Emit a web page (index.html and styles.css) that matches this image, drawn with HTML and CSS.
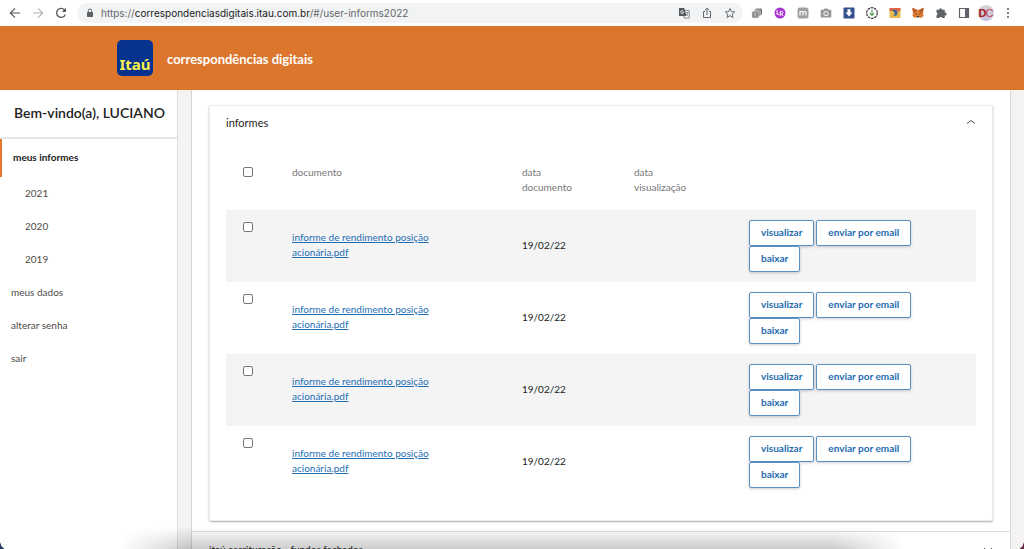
FILE: index.html
```html
<!DOCTYPE html>
<html lang="pt-BR">
<head>
<meta charset="utf-8">
<meta name="viewport" content="width=device-width, initial-scale=1">
<title>correspondências digitais</title>
<link rel="stylesheet" href="styles.css">
</head>
<body>
<div class="toolbar">
  <button class="tool" aria-label="Voltar"><svg viewBox="0 0 14 14"><path d="M12 7H2.500M7 2.300 2.300 7 7 11.700" fill="none" stroke="#55585c" stroke-width="1.200"/></svg></button>
  <button class="tool" aria-label="Avançar"><svg viewBox="0 0 14 14"><path d="M2 7h9.500M7 2.300 11.700 7 7 11.700" fill="none" stroke="#b4b6b9" stroke-width="1.200"/></svg></button>
  <button class="tool" aria-label="Recarregar"><svg viewBox="0 0 14 14"><path d="M10.800 4.300A4.500 4.500 0 1 0 11.300 8.500" fill="none" stroke="#55585c" stroke-width="1.300"/><path d="M12 1.800v4.200H7.800z" fill="#55585c"/></svg></button>
  <div class="address">
    <svg class="lock" viewBox="0 0 8 10"><rect x="1" y="4" width="6" height="5" rx=".6" fill="#5f6368"/><path d="M2.300 4V2.700a1.700 1.700 0 0 1 3.400 0V4" fill="none" stroke="#5f6368"/></svg>
    <span class="url">https://<span class="host">correspondenciasdigitais.itau.com.br</span>/#/user-informs2022</span>
    <button class="small" aria-label="Traduzir"><svg viewBox="0 0 12 12"><path d="M4.500 3.500h6.800v7.600H6.200z" fill="#f1f3f4" stroke="#74777b" stroke-width=".8"/><path d="M1 1h5.300l2 8H1z" fill="#55585c"/><path d="M7.300 5.700h3.200M9 4.900v.8M10 5.700q-.7 2-2.300 3M8 6.500q.8 1.500 2.300 2.200" fill="none" stroke="#777" stroke-width=".7"/><path d="M5.300 4A1.500 1.500 0 1 0 5.400 6V5.200H4" fill="none" stroke="#fff" stroke-width=".8"/></svg></button>
    <button class="small" aria-label="Compartilhar"><svg viewBox="0 0 12 12"><path d="M4 4.500H2.500v6h7v-6H8M6 8V1.500M3.900 3.300 6 1.200l2.100 2.100" fill="none" stroke="#5f6368" stroke-width=".95"/></svg></button>
    <button class="small" aria-label="Favoritar"><svg viewBox="0 0 12 12"><path d="m6 1.500 1.350 3.100 3.350.3-2.500 2.250.75 3.300L6 8.700l-2.950 1.750.75-3.300L1.300 4.900l3.350-.3z" fill="none" stroke="#5f6368" stroke-width=".95"/></svg></button>
  </div>
  <div class="extensions">
    <button class="small" aria-label="Abas"><svg viewBox="0 0 12 12"><rect x="4.500" y="1.500" width="6.500" height="6.500" rx="1" fill="#777"/><rect x="2.800" y="3" width="6.500" height="6.500" rx="1" fill="#999" stroke="#ddd" stroke-width=".5"/><rect x="1" y="4.500" width="6.500" height="6.500" rx="1" fill="#888" stroke="#ddd" stroke-width=".5"/><path d="M4.200 6v3.500M3.200 6.800l1-.8" stroke="#ddd" stroke-width=".8"/></svg></button>
    <button class="small" aria-label="LanguageTool"><svg viewBox="0 0 12 12"><circle cx="6" cy="6" r="5.500" fill="#a832d0"/><path d="M3 3v4.200h2M6.200 9V4.300h1.500a1.200 1.200 0 0 1 0 2.500H6.400M7.600 6.800 9 9" fill="none" stroke="#fff" stroke-width="1"/></svg></button>
    <button class="small" aria-label="Extensão M"><svg viewBox="0 0 12 12"><rect x=".5" y=".5" width="11" height="11" rx="2.500" fill="#a0a0a0"/><path d="M3 8.500V4.200M3 5.300q1.500-1.600 3 0v3.200M6 5.300q1.500-1.600 3 0v3.200" fill="none" stroke="#fff" stroke-width="1.200"/></svg></button>
    <button class="small" aria-label="Captura de tela"><svg viewBox="0 0 12 12"><path d="M1.700 2.800H3.500l1-1.400h3l1 1.400h1.800a1 1 0 0 1 1 1v5.700a1 1 0 0 1-1 1H1.700a1 1 0 0 1-1-1V3.800a1 1 0 0 1 1-1z" fill="#979797"/><circle cx="6" cy="6.500" r="2.600" fill="#eee"/><circle cx="6" cy="6.500" r="1.600" fill="#999"/></svg></button>
    <button class="small" aria-label="Baixar mídia"><svg viewBox="0 0 12 12"><rect x=".5" y=".5" width="11" height="11" rx=".8" fill="#34508c"/><path d="M4.500 2.300h3v3.200h2L6 9.500 2.500 5.500h2z" fill="#fff"/></svg></button>
    <button class="small" aria-label="Gerenciador de downloads"><svg viewBox="0 0 12 12"><circle cx="6" cy="6" r="5.300" fill="none" stroke="#333" stroke-width="1.200" stroke-dasharray="2.500 .8"/><path d="M6 2.700v5.700M3.800 6.200 6 8.500l2.200-2.300" fill="none" stroke="#5fa25c" stroke-width="1.200"/></svg></button>
    <button class="small" aria-label="Mapa"><svg viewBox="0 0 12 12"><rect x=".5" y="1" width="11" height="10" fill="#e8b94c"/><path d="M.5 1h11v3H.5z" fill="#d8664b"/><path d="M3 3h3.500L9 5 7.500 8.500 4.500 9 6 6z" fill="#34659b"/></svg></button>
    <button class="small" aria-label="MetaMask"><svg viewBox="0 0 12 12"><path d="m.4.700 4.300 2h2.600l4.300-2-.6 4.800.6 3.500-2.600 1.900-1.500-.7H4.500L3 10.900.4 9 1 5.500z" fill="#de7d32"/><path d="m.4.700 4.300 2-.8 2.700H1zM11.600.700l-4.300 2 .8 2.700H11z" fill="#b95a2b"/><path d="M3.300 6.200 5 7l-.8.700zM8.700 6.200 7 7l.8.700zM5 9h2l.5 1.200h-3z" fill="#343434"/></svg></button>
    <button class="small" aria-label="Extensões"><svg viewBox="0 0 12 12"><path d="M1.500 2.800h2.700a1.500 1.500 0 1 1 3 0h2.600v2.800a1.500 1.500 0 1 1 0 2.900V11H7.200a1.500 1.500 0 0 0-2.900 0H1.500V8.400a1.500 1.500 0 0 0 0-2.800z" fill="#5f6368"/></svg></button>
    <button class="small" aria-label="Painel lateral"><svg viewBox="0 0 12 12"><path d="M1.500 1.500h9v9h-9z" fill="#fff" stroke="#5f6368" stroke-width="1.200"/><path d="M7 1.500h3.500v9H7z" fill="#5f6368"/></svg></button>
    <button class="profile" aria-label="Perfil"><span class="initial-d">D</span><span class="initial-c">C</span></button>
    <button class="small" aria-label="Menu"><svg viewBox="0 0 12 12"><g fill="#5f6368"><circle cx="6" cy="2" r="1.100"/><circle cx="6" cy="6" r="1.100"/><circle cx="6" cy="10" r="1.100"/></g></svg></button>
  </div>
</div>

<header class="header">
  <div class="logo">Itaú</div>
  <h1 class="title">correspondências digitais</h1>
</header>

<div class="page">
  <aside class="sidebar">
    <h2 class="welcome">Bem-vindo(a), LUCIANO</h2>
    <nav class="menu">
      <a class="item active" href="#informes">meus informes</a>
      <a class="item year" href="#2021">2021</a>
      <a class="item year" href="#2020">2020</a>
      <a class="item year" href="#2019">2019</a>
      <a class="item" href="#dados">meus dados</a>
      <a class="item" href="#senha">alterar senha</a>
      <a class="item" href="#sair">sair</a>
    </nav>
  </aside>
  <main class="main">
    <section class="card">
      <button class="card-head" aria-expanded="true">informes
        <svg class="chevron" viewBox="0 0 10 6"><path d="M1 4.500 5 1.500 9 4.500" fill="none" stroke="#555"/></svg>
      </button>
      <table class="docs">
        <thead>
          <tr><th class="pick"><input class="check" type="checkbox" aria-label="selecionar todos"></th><th class="name">documento</th><th class="date">data documento</th><th class="seen">data visualização</th><th class="actions"></th></tr>
        </thead>
        <tbody>
          <tr><td class="pick"><input class="check" type="checkbox" aria-label="selecionar informe 1"></td><td class="name"><a class="doc" href="#doc1">informe de rendimento posição acionária.pdf</a></td><td class="date">19/02/22</td><td class="seen"></td><td class="actions"><div class="buttons"><button class="btn">visualizar</button><button class="btn">enviar por email</button><button class="btn">baixar</button></div></td></tr>
          <tr><td class="pick"><input class="check" type="checkbox" aria-label="selecionar informe 2"></td><td class="name"><a class="doc" href="#doc2">informe de rendimento posição acionária.pdf</a></td><td class="date">19/02/22</td><td class="seen"></td><td class="actions"><div class="buttons"><button class="btn">visualizar</button><button class="btn">enviar por email</button><button class="btn">baixar</button></div></td></tr>
          <tr><td class="pick"><input class="check" type="checkbox" aria-label="selecionar informe 3"></td><td class="name"><a class="doc" href="#doc3">informe de rendimento posição acionária.pdf</a></td><td class="date">19/02/22</td><td class="seen"></td><td class="actions"><div class="buttons"><button class="btn">visualizar</button><button class="btn">enviar por email</button><button class="btn">baixar</button></div></td></tr>
          <tr><td class="pick"><input class="check" type="checkbox" aria-label="selecionar informe 4"></td><td class="name"><a class="doc" href="#doc4">informe de rendimento posição acionária.pdf</a></td><td class="date">19/02/22</td><td class="seen"></td><td class="actions"><div class="buttons"><button class="btn">visualizar</button><button class="btn">enviar por email</button><button class="btn">baixar</button></div></td></tr>
        </tbody>
      </table>
    </section>
    <button class="next" aria-expanded="false">itaú escrituração - fundos fechados
      <svg class="chevron" viewBox="0 0 10 6"><path d="M1 1Q5 5.500 9 1" fill="none" stroke="#555"/></svg>
    </button>
  </main>
</div>
<div class="dock-shadow"></div>
<div class="corner left"></div>
<div class="corner right"></div>
</body>
</html>
```

FILE: styles.css
```css
* { box-sizing: border-box; }

body {
  display: flex;
  flex-direction: column;
  height: 100vh;
  margin: 0;
  overflow: hidden;
  background: #f4f3f1;
  color: #222;
  font: 10px/15px Lato, sans-serif;
}

button {
  padding: 0;
  border: 0;
  background: none;
  color: inherit;
  font: inherit;
}

svg { display: block; }

/* browser toolbar */
.toolbar {
  display: flex;
  flex: none;
  align-items: center;
  height: 26px;
  padding: 0 10px 0 8px;
  background: #fff;
}

.tool { width: 14px; margin-right: 9px; }

.small { flex: none; width: 12px; height: 12px; }

.address {
  display: flex;
  flex: 1;
  align-items: center;
  gap: 11px;
  height: 20px;
  padding: 0 7px 0 9px;
  border-radius: 10px;
  background: #f1f3f4;
}

.lock { width: 8px; height: 10px; margin-right: -4px; }

.url {
  flex: 1;
  color: #65686c;
  font: 10px/20px Inter, Roboto, sans-serif;
  white-space: nowrap;
}

.host { color: #202124; }

.extensions {
  display: flex;
  align-items: center;
  gap: 11px;
  margin-left: 8px;
}

.profile {
  width: 16px;
  height: 16px;
  margin: 0 -3px;
  border-radius: 8px;
  background: linear-gradient(#d8d2cc, #c6c3e2);
  font: 11px/16px "Liberation Sans", sans-serif;
  white-space: nowrap;
}

.initial-d { color: #a3161c; font-weight: bold; }
.initial-c { margin-left: -1px; color: #c8405c; }

/* site header */
.header {
  display: flex;
  flex: none;
  align-items: center;
  gap: 14px;
  height: 64px;
  padding: 2px 0 0 117px;
  background: #dc762c;
}

.logo {
  width: 36px;
  height: 36px;
  margin-bottom: 2px;
  padding-top: 13px;
  border-radius: 5px;
  background: #07338f;
  color: #fbf34b;
  font: bold 15px/22px "Noto Sans", sans-serif;
  text-align: center;
}

.title {
  margin: 0;
  color: #fff;
  font: 700 13px/20px Lato, sans-serif;
}

.page {
  display: flex;
  flex: 1;
  gap: 13px;
  min-height: 0;
  padding-right: 13px;
}

/* side menu */
.sidebar {
  flex: none;
  width: 178px;
  border-right: 1px solid #dedede;
  background: #fff;
}

.welcome {
  margin: 0;
  padding: 13px 0 14px 14px;
  border-bottom: 2px solid #e6e6e6;
  font: 600 14px/20px Lato, sans-serif;
  white-space: nowrap;
}

.menu { display: flex; flex-direction: column; }

.item {
  padding: 9px 11px;
  color: #4d4a47;
  line-height: 15px;
  text-decoration: none;
}

.active {
  padding: 11px 11px 12px;
  border-left: 2px solid #e4762d;
  color: #222;
  font-weight: 700;
}

.year { padding-left: 25px; }

/* content */
.main {
  flex: 1;
  min-width: 0;
  border: solid #d9d7d5;
  border-width: 0 1px;
  background: #fff;
}

.card {
  margin: 15px 17px 10px;
  padding: 0 16px 22px;
  border: 1px solid #ececec;
  border-radius: 2px;
  box-shadow: 0 1px 2px #aaa;
}

.card-head {
  display: flex;
  align-items: center;
  justify-content: space-between;
  width: 100%;
  height: 34px;
  padding-bottom: 2px;
  font-size: 11px;
}

.chevron { width: 10px; height: 6px; }

.docs {
  width: 100%;
  border-collapse: collapse;
  table-layout: fixed;
}

.docs th {
  height: 70px;
  padding: 0;
  color: #777;
  font-weight: 400;
  text-align: left;
}

.docs td { height: 72px; padding: 0; }

.docs td.name, .docs td.date { padding-bottom: 2px; }

.docs tbody tr:nth-child(odd) { background: #f4f4f4; }

.pick { width: 66px; }
.name { width: 230px; }
.date { width: 112px; }
.seen { width: 115px; }

.docs .name { padding-right: 70px; }
.docs .date, .docs .seen { padding-right: 50px; }
.docs .pick { padding: 12px 0 0 17px; vertical-align: top; }
.docs th.name, .docs th.date, .docs th.seen { padding-top: 25px; vertical-align: top; }
.docs th.pick { padding-top: 27px; }

.check {
  display: block;
  width: 10px;
  height: 10px;
  margin: 0;
  border: 1px solid #777;
  border-radius: 2px;
  background: #fff;
  appearance: none;
}

.doc { color: #246fb4; }

.buttons {
  display: flex;
  flex-wrap: wrap;
  column-gap: 2px;
  max-width: 175px;
}

.btn {
  height: 26px;
  padding: 0 11px 2px;
  border: 1px solid #5a91c5;
  border-radius: 2px;
  background: #fff;
  box-shadow: 0 1px 3px #0003;
  color: #246aae;
  font-weight: 700;
  white-space: nowrap;
}

.next {
  display: flex;
  align-items: center;
  justify-content: space-between;
  width: 100%;
  height: 36px;
  padding: 0 17px;
  border-top: 1px solid #ddd;
}

/* desktop edges over the window */
.dock-shadow {
  position: absolute;
  right: 120px;
  bottom: 0;
  left: 120px;
  height: 22px;
  background: linear-gradient(#0000, #0003);
  mask-image: linear-gradient(90deg, #0000, #000 70px calc(100% - 70px), #0000);
}

.corner {
  position: absolute;
  bottom: 0;
  width: 5px;
  height: 7px;
}

.left { left: 0; background: #253c68; clip-path: polygon(0 0, 30% 60%, 90% 100%, 0 100%); }
.right { right: 0; background: #682744; clip-path: polygon(100% 0, 70% 60%, 10% 100%, 100% 100%); }
```
